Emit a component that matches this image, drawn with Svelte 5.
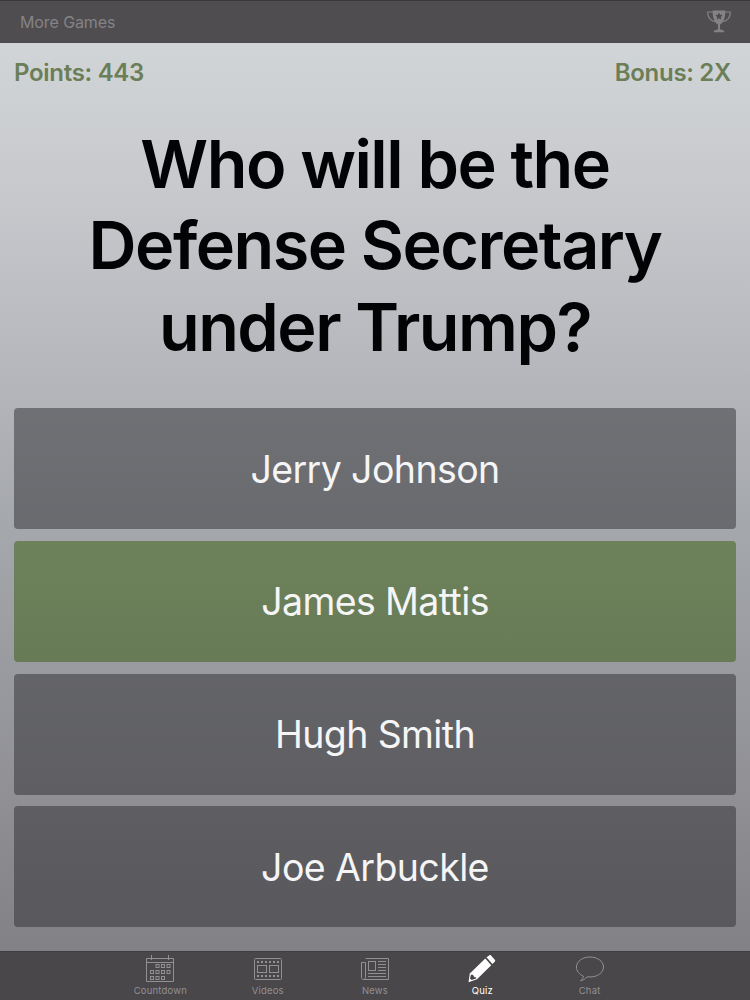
<script lang="ts">
	const question = ['Who will be the', 'Defense Secretary', 'under Trump?'];
	const answers = ['Jerry Johnson', 'James Mattis', 'Hugh Smith', 'Joe Arbuckle'];
	const tabs = ['Countdown', 'Videos', 'News', 'Quiz', 'Chat'];

	let selected = $state('James Mattis');
	let activeTab = $state('Quiz');
</script>

<div class="app">
	<header class="topbar">
		<button class="more">More Games</button>
		<button class="trophy" aria-label="High scores">
			<svg width="26" height="26" viewBox="0 0 26 26">
				<path d="M6.6 1.5h12.8c0 8-2 12.2-5.4 14v4.7l4.2 1.600v1.400H7.800v-1.400l4.200-1.600v-4.700C8.600 13.700 6.600 9.500 6.600 1.500Z" fill="#858285" />
				<path d="M6.700 3H1.600c.2 5.500 3 8.700 7.200 9.700M19.300 3h5.100c-.2 5.500-3 8.700-7.200 9.700" fill="none" stroke="#858285" stroke-width="1.2" />
				<path d="m13 3.500 1.100 2.300 2.500.3-1.800 1.800.4 2.500-2.200-1.200-2.200 1.200.4-2.500-1.800-1.800 2.500-.3Z" fill="#4d4b4e" />
			</svg>
		</button>
	</header>

	<main>
		<div class="status">
			<span class="points">Points: 443</span>
			<span class="bonus">Bonus: 2X</span>
		</div>
		<h1>
			{#each question as line}
				<span>{line}</span>
			{/each}
		</h1>
		<div class="answers">
			{#each answers as answer}
				<button class:selected={selected === answer} onclick={() => (selected = answer)}>{answer}</button>
			{/each}
		</div>
	</main>

	<nav>
		{#each tabs as tab}
			<button class:active={activeTab === tab} onclick={() => (activeTab = tab)}>
				<svg width="32" height="30" viewBox="0 0 32 30" fill="none" stroke="currentColor">
					{#if tab === 'Countdown'}
						<path d="M2.500 4.500h27v23h-27ZM2.500 8.500h27M7.500 1v5M24.500 1v5" />
						{#each [10.5, 16.5, 22.5] as y, row}
							{#each [6.5, 12, 17.5, 23] as x, col}
								{#if !(row === 0 && col === 0) && !(row === 2 && col === 3)}
									<rect {x} {y} width="3" height="3" />
								{/if}
							{/each}
						{/each}
					{:else if tab === 'Videos'}
						<rect x="2.5" y="4.5" width="27" height="21" rx="1" />
						<rect x="5.5" y="11.5" width="9" height="7" />
						<rect x="17.5" y="11.5" width="9" height="7" />
						<path d="M5 8h23M5 22h23" stroke-width="2" stroke-dasharray="2 2" />
					{:else if tab === 'News'}
						<path d="M6.500 4.500h23v21h-25c-1.300 0-2-.8-2-2v-15h4v15c0 1.300-.8 2-2 2" />
						<rect x="9.5" y="7.5" width="7" height="9" />
						<path d="M19 7.500h8M19 10.500h8M19 13.500h8M19 16.500h8M9 19.500h18M9 22.500h18" />
					{:else if tab === 'Quiz'}
						<path d="m20.500 3.300 3-2.100c.5-.4 1.100-.3 1.500.2l4 4.700c.4.500.3 1-.1 1.500l-2.500 2.500Z" fill="currentColor" stroke="none" />
						<path d="m19.300 4.500 5.900 6.700L11 25.300l-8.500 2.900 1.300-8.800Z" fill="currentColor" stroke="none" />
						<path d="m4.900 20.700 2 .1 1.400 2.200 1.800.4.1 1.200-4.600 1.500-1.600-1.600Z" fill="#49474a" stroke="none" />
					{:else}
						<path d="M9.500 22.300C5 20.300 2.500 17 2.500 13c0-5.600 6-10 13.500-10s13.500 4.400 13.500 10S23.500 23 16 23c-1 0-2-.1-3-.2-1.800 2.300-3.800 3.500-6.500 4 1.600-1.300 2.700-2.700 3-4.500Z" />
					{/if}
				</svg>
				<span>{tab}</span>
			</button>
		{/each}
	</nav>
</div>

<style>
	:global(body) {
		margin: 0;
	}

	.app {
		display: flex;
		flex-direction: column;
		height: 1000px;
		overflow: hidden;
		font-family: Inter, 'Liberation Sans', sans-serif;
		background: #848387;
	}

	button {
		padding: 0;
		border: 0;
		background: none;
		font-family: inherit;
		cursor: pointer;
	}

	.topbar {
		flex: none;
		display: flex;
		align-items: center;
		justify-content: space-between;
		box-sizing: border-box;
		height: 43px;
		padding: 0 18px 0 20px;
		border-top: 1px solid #3b393c;
		background: #4f4d50;
	}

	.more {
		color: #858386;
		font-size: 16px;
		letter-spacing: -0.1px;
	}

	.trophy {
		display: flex;
	}

	main {
		flex: 1;
		display: flex;
		flex-direction: column;
		padding: 0 14px;
		background: linear-gradient(#d1d5d7 0%, #c7c8cc 17%, #b6b7bc 36%, #a2a5a9 56%, #919196 81%, #828185 100%);
	}

	.status {
		display: flex;
		justify-content: space-between;
		align-items: center;
		height: 59px;
		padding: 0 5px 0 0;
		color: #6b7e57;
		font-size: 24px;
		font-weight: 600;
		letter-spacing: -0.3px;
	}

	h1 {
		height: 286px;
		margin: 0 0 20px;
		padding-top: 22px;
		box-sizing: border-box;
		color: #020304;
		font-size: 66.5px;
		font-weight: 600;
		line-height: 81.3px;
		text-align: center;
		letter-spacing: -1.5px;
	}

	h1 span {
		display: block;
	}

	.answers {
		display: grid;
		grid-template-rows: repeat(4, 121px);
		row-gap: 11.8px;
	}

	.answers button {
		padding-top: 1px;
		border-radius: 4px;
		color: #f5f5f6;
		background: rgba(46, 46, 50, 0.5);
		font-size: 37.5px;
		letter-spacing: -0.6px;
	}

	.answers .selected {
		background: linear-gradient(#6d825a, #677b57);
	}

	nav {
		flex: none;
		display: grid;
		grid-template-columns: repeat(5, 107.3px);
		justify-content: center;
		box-sizing: border-box;
		height: 49px;
		border-top: 1px solid #403e41;
		background: #49474a;
	}

	nav button {
		display: flex;
		flex-direction: column;
		align-items: center;
		padding-top: 2px;
		color: #929093;
	}

	nav span {
		padding-top: 1px;
		font-size: 9.5px;
		line-height: 12px;
		letter-spacing: 0.2px;
	}

	nav .active {
		color: #fff;
	}
</style>
